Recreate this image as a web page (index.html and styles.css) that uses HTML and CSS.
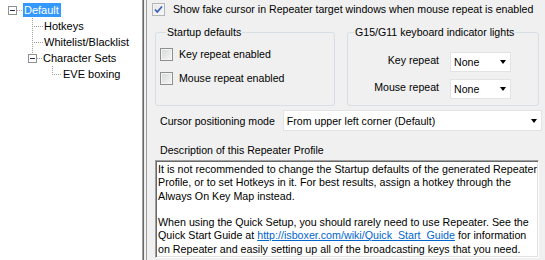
FILE: index.html
```html
<!DOCTYPE html>
<html>
<head>
<meta charset="utf-8">
<link rel="stylesheet" href="styles.css">
</head>
<body>
<div class="app">
  <div class="tree">
    <div class="node">
      <svg class="conn" width="23" height="16" viewBox="0 0 23 16">
        <rect x="8.5" y="4.5" width="8" height="8" fill="#fff" stroke="#919191"/>
        <line x1="10" y1="8.5" x2="15" y2="8.5" stroke="#1f2f55"/>
        <line x1="17" y1="8.5" x2="23" y2="8.5" stroke="#a0a0a0" stroke-dasharray="1 1"/>
      </svg>
      <span class="label selected">Default</span>
    </div>
    <div class="node">
      <svg class="conn" width="44" height="16" viewBox="0 0 44 16">
        <line x1="32.5" y1="0" x2="32.5" y2="16" stroke="#a0a0a0" stroke-dasharray="1 1"/>
        <line x1="34" y1="8.5" x2="43" y2="8.5" stroke="#a0a0a0" stroke-dasharray="1 1"/>
      </svg>
      <span class="label">Hotkeys</span>
    </div>
    <div class="node">
      <svg class="conn" width="44" height="16" viewBox="0 0 44 16">
        <line x1="32.5" y1="0" x2="32.5" y2="16" stroke="#a0a0a0" stroke-dasharray="1 1"/>
        <line x1="34" y1="8.5" x2="43" y2="8.5" stroke="#a0a0a0" stroke-dasharray="1 1"/>
      </svg>
      <span class="label">Whitelist/Blacklist</span>
    </div>
    <div class="node">
      <svg class="conn" width="43" height="16" viewBox="0 0 43 16">
        <line x1="32.5" y1="0" x2="32.5" y2="4" stroke="#a0a0a0" stroke-dasharray="1 1"/>
        <rect x="28.5" y="4.5" width="8" height="8" fill="#fff" stroke="#919191"/>
        <line x1="30" y1="8.5" x2="35" y2="8.5" stroke="#1f2f55"/>
        <line x1="37" y1="8.5" x2="43" y2="8.5" stroke="#a0a0a0" stroke-dasharray="1 1"/>
      </svg>
      <span class="label">Character Sets</span>
    </div>
    <div class="node">
      <svg class="conn" width="63" height="16" viewBox="0 0 63 16">
        <line x1="52.5" y1="0" x2="52.5" y2="9" stroke="#a0a0a0" stroke-dasharray="1 1"/>
        <line x1="54" y1="8.5" x2="62" y2="8.5" stroke="#a0a0a0" stroke-dasharray="1 1"/>
      </svg>
      <span class="label">EVE boxing</span>
    </div>
  </div>
  <div class="splitter"></div>
  <div class="main">
    <label class="check top-check">
      <span class="box checked">
        <svg width="11" height="11" viewBox="0 0 11 11"><path d="M2 5.5 L4.3 8 L9 2.5" fill="none" stroke="#3b5fb6" stroke-width="1.7"/></svg>
      </span>
      <span>Show fake cursor in Repeater target windows when mouse repeat is enabled</span>
    </label>
    <div class="groups">
      <fieldset class="group startup">
        <legend>Startup defaults</legend>
        <label class="check"><span class="box"></span><span>Key repeat enabled</span></label>
        <label class="check"><span class="box"></span><span>Mouse repeat enabled</span></label>
      </fieldset>
      <fieldset class="group lights">
        <legend>G15/G11 keyboard indicator lights</legend>
        <div class="light-grid">
          <span class="lbl">Key repeat</span>
          <div class="combo small"><span>None</span><span class="arrow"></span></div>
          <span class="lbl">Mouse repeat</span>
          <div class="combo small"><span>None</span><span class="arrow"></span></div>
        </div>
      </fieldset>
    </div>
    <div class="cursor-row">
      <span class="lbl">Cursor positioning mode</span>
      <div class="combo wide"><span>From upper left corner (Default)</span><span class="arrow"></span></div>
    </div>
    <div class="desc-label">Description of this Repeater Profile</div>
    <div class="desc-box">
      <p>It is not recommended to change the Startup defaults of the generated Repeater<br>Profile, or to set Hotkeys in it. For best results, assign a hotkey through the<br>Always On Key Map instead.</p>
      <p>When using the Quick Setup, you should rarely need to use Repeater. See the<br>Quick Start Guide at <a href="#">http://isboxer.com/wiki/Quick_Start_Guide</a> for information<br>on Repeater and easily setting up all of the broadcasting keys that you need.</p>
    </div>
  </div>
</div>
</body>
</html>
```
FILE: styles.css
```css
* { box-sizing: border-box; }
html, body { margin: 0; padding: 0; }
body {
  width: 545px;
  height: 260px;
  overflow: hidden;
  font-family: "Liberation Sans", Arial, sans-serif;
  font-size: 11px;
  color: #000;
  background: #f0f0f0;
}
.app {
  display: flex;
  height: 260px;
}
.tree {
  flex: none;
  width: 144px;
  background: #fff;
  border-right: 1px solid #696969;
  box-shadow: inset -1px 0 0 #a0a0a0;
  padding-top: 2px;
}
.node {
  display: flex;
  align-items: center;
  height: 16px;
}
.conn { flex: none; display: block; }
.label {
  line-height: 14px;
  color: #000;
  white-space: nowrap;
}
.selected {
  background: #3399ff;
  color: #fff;
  padding: 0 2px 0 1px;
}
.splitter {
  flex: none;
  width: 2px;
}
.main {
  flex: 1;
  min-width: 0;
  border-left: 1px solid #a0a0a0;
  padding-top: 3px;
  font-size: 10.6px;
}
.check {
  display: flex;
  align-items: center;
  gap: 6px;
  line-height: 13px;
  white-space: nowrap;
}
.box {
  flex: none;
  width: 13px;
  height: 13px;
  border: 1px solid #8e8f8f;
  background: linear-gradient(135deg, #d8d8d8, #f6f6f6);
  box-shadow: inset 0 0 0 1px #f4f4f4;
  display: flex;
  align-items: center;
  justify-content: center;
}
.box.checked {
  border-color: #b5b5b5;
  background: linear-gradient(135deg, #e4e6ea, #f7f7f7);
}
.top-check { margin-left: 5px; gap: 8px; }
.groups {
  display: flex;
  gap: 12px;
  margin: 10px 0 0 8px;
}
.group {
  margin: 0;
  border: 1px solid #d5dfe5;
  border-radius: 3px;
  height: 80px;
  padding: 0;
  min-width: 0;
}
.group legend {
  padding: 0 1px;
  margin-left: 6px;
  line-height: 13px;
  white-space: nowrap;
}
.startup {
  flex: none;
  width: 180px;
  padding: 9px 0 0 4px;
  display: flex;
  flex-direction: column;
  gap: 11px;
}
.lights {
  flex: none;
  width: 192px;
  padding: 13px 27px 0 0;
}
.light-grid {
  display: grid;
  grid-template-columns: auto 61px;
  justify-content: end;
  column-gap: 11px;
  row-gap: 7px;
  align-items: center;
}
.lbl { text-align: right; white-space: nowrap; }
.light-grid .lbl { margin-top: -4px; }
.combo {
  display: flex;
  align-items: center;
  justify-content: space-between;
  background: #fff;
  border: 1px solid #e3e3e3;
  height: 20px;
  padding: 0 4px 0 3px;
  white-space: nowrap;
}
.arrow {
  width: 0;
  height: 0;
  border-left: 3.5px solid transparent;
  border-right: 3.5px solid transparent;
  border-top: 4px solid #000;
}
.cursor-row {
  display: flex;
  align-items: center;
  margin: 4px 3px 0 13px;
  gap: 8px;
}
.combo.wide {
  flex: 1;
  height: 21px;
  padding-left: 3px;
  padding-right: 4px;
}
.desc-label {
  margin: 13px 0 0 13px;
  line-height: 13px;
}
.desc-box {
  margin: 3px 6px 0 8px;
  height: 98px;
  overflow: hidden;
  background: #fff;
  border-top: 1px solid #a0a0a0;
  border-left: 1px solid #a0a0a0;
  border-right: 1px solid #fff;
  border-bottom: 1px solid #fff;
  box-shadow: inset 1px 1px 0 #696969, inset -1px -1px 0 #e3e3e3;
  padding: 2px 0 0 2px;
  font-size: 10.7px;
  line-height: 13.3px;
}
.desc-box p { margin: 0 0 13.3px 0; white-space: nowrap; }
.desc-box a { color: #0066cc; text-decoration: underline; }
```
